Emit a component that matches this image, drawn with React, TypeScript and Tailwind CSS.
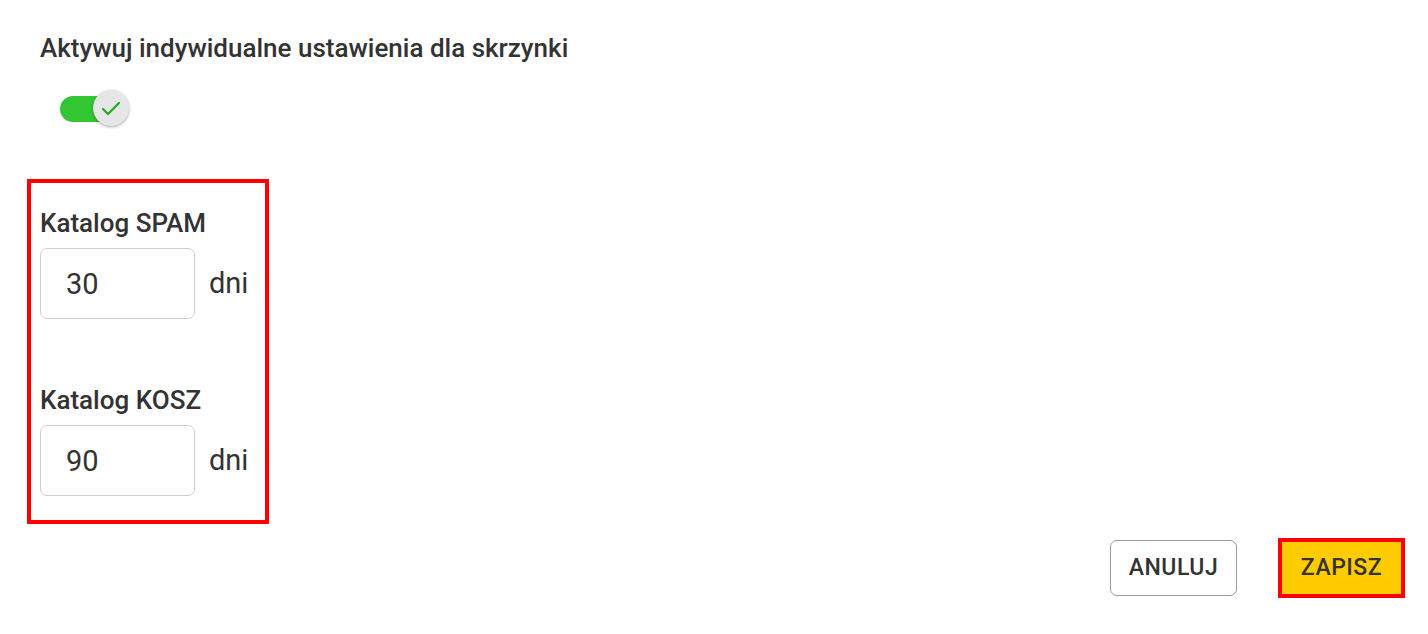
import { useState } from 'react';

type RetentionFieldProps = {
  label: string;
  value: string;
  onChange: (value: string) => void;
};

function RetentionField({ label, value, onChange }: RetentionFieldProps) {
  return (
    <div>
      <label className="block text-[26px] leading-[28px] font-medium text-[#333]">{label}</label>
      <div className="mt-[11px] flex items-center gap-[14px]">
        <input
          type="text"
          value={value}
          onChange={(e) => onChange(e.target.value)}
          className="h-[71px] w-[155px] rounded-[7px] border border-[#cfcfcf] bg-white px-[25px] text-[29px] text-[#333] outline-none"
        />
        <span className="text-[29px] text-[#333]">dni</span>
      </div>
    </div>
  );
}

function Toggle({ checked, onChange }: { checked: boolean; onChange: (v: boolean) => void }) {
  return (
    <button
      type="button"
      role="switch"
      aria-checked={checked}
      onClick={() => onChange(!checked)}
      className="relative block h-[36px] w-[69px]"
    >
      <span
        className={`absolute left-0 top-[6px] h-[26px] w-[54px] rounded-full ${checked ? 'bg-[#33c633]' : 'bg-[#c4c4c4]'}`}
      />
      <span
        className={`absolute top-0 flex h-[36px] w-[36px] items-center justify-center rounded-full bg-[#e6e6e6] shadow-[0_1px_3px_rgba(0,0,0,0.35)] ${checked ? 'left-[33px]' : 'left-0'}`}
      >
        {checked && (
          <svg width="20" height="15" viewBox="0 0 20 15" fill="none">
            <path d="M2 8l5 5L18 2" stroke="#22a822" strokeWidth="2.2" strokeLinecap="round" strokeLinejoin="round" />
          </svg>
        )}
      </span>
    </button>
  );
}

export default function App() {
  const [enabled, setEnabled] = useState(true);
  const [spamDays, setSpamDays] = useState('30');
  const [trashDays, setTrashDays] = useState('90');

  return (
    <div className="min-h-[634px] bg-white pl-[40px] pr-[23px] pt-[34px] font-['Roboto',sans-serif]">
      <h2 className="text-[26px] leading-[28px] font-medium text-[#333]">
        Aktywuj indywidualne ustawienia dla skrzynki
      </h2>

      <div className="mt-[28px] flex pl-[20px]">
        <Toggle checked={enabled} onChange={setEnabled} />
      </div>

      <div className="-ml-[13px] mt-[53px] flex w-[242px] flex-col gap-[67px] border-4 border-[#ff0000] pl-[9px] pt-[26px] pb-[24px]">
        <RetentionField label="Katalog SPAM" value={spamDays} onChange={setSpamDays} />
        <RetentionField label="Katalog KOSZ" value={trashDays} onChange={setTrashDays} />
      </div>

      <div className="mt-[14px] flex items-center justify-end gap-[41px]">
        <button
          type="button"
          className="h-[56px] w-[127px] rounded-[7px] border border-[#9a9a9a] bg-white text-[23px] font-medium tracking-[0.5px] text-[#333]"
        >
          ANULUJ
        </button>
        <button
          type="button"
          className="h-[60px] w-[127px] border-4 border-[#ff0000] bg-[#ffcc00] text-[23px] font-medium tracking-[0.5px] text-[#333]"
        >
          ZAPISZ
        </button>
      </div>
    </div>
  );
}
